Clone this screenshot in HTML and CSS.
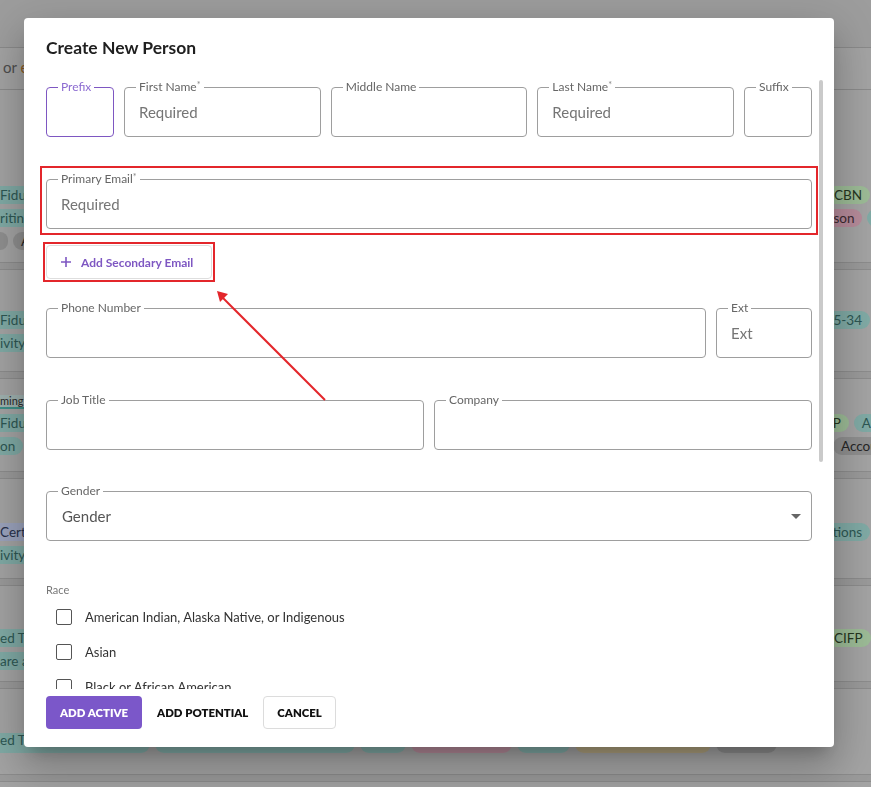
FILE: index.html
```html
<!DOCTYPE html>
<html lang="en">
	<head>
		<meta charset="UTF-8" />
		<meta name="viewport" content="width=device-width, initial-scale=1.0" />
		<title>Create New Person</title>
		<link rel="stylesheet" href="styles.css">
	</head>
	<body>
		<div class="page">
			<div class="topbar"></div>
			<div class="filterbar"><span class="dim">or</span> <span class="accent">e</span></div>

			<div class="row row-c">
				<div class="tagline">
					<div class="left"><span class="pill teal">Fiduciary Services</span></div>
					<div class="right"><span class="pill green">CBN</span></div>
				</div>
				<div class="tagline">
					<div class="left"><span class="pill teal">ritings and Reviews</span></div>
					<div class="right"><span class="pill pink shift-p">Jackson</span><span class="pill teal">A</span></div>
				</div>
				<div class="tagline">
					<div class="left"><span class="pill gray short"></span><span class="pill gray">Admin</span></div>
					<div class="right"></div>
				</div>
			</div>
			<div class="sep"></div>

			<div class="row row-d">
				<div class="tagline">
					<div class="left"><span class="pill teal">Fiduciary Services</span></div>
					<div class="right"><span class="pill teal shift-m">2025-34</span></div>
				</div>
				<div class="tagline">
					<div class="left"><span class="pill teal">ivity Reports</span></div>
					<div class="right"></div>
				</div>
			</div>
			<div class="sep"></div>

			<div class="row row-e">
				<div class="tab">ming</div>
				<div class="tagline">
					<div class="left"><span class="pill teal">Fiduciary Services</span></div>
					<div class="right"><span class="pill green shift-s">CFP</span><span class="pill teal">AIF</span></div>
				</div>
				<div class="tagline">
					<div class="left"><span class="pill teal">on</span></div>
					<div class="right"><span class="pill gray push">Accounting</span></div>
				</div>
			</div>
			<div class="sep"></div>

			<div class="row row-f">
				<div class="tagline">
					<div class="left"><span class="pill lav">Certified Planner</span></div>
					<div class="right"><span class="pill teal shift-l">Associations</span></div>
				</div>
				<div class="tagline">
					<div class="left"><span class="pill teal">ivity Reports</span></div>
					<div class="right"></div>
				</div>
			</div>
			<div class="sep"></div>

			<div class="row row-g">
				<div class="tagline">
					<div class="left"><span class="pill teal">ed Trust Company</span></div>
					<div class="right"><span class="pill green">CIFP</span></div>
				</div>
				<div class="tagline">
					<div class="left"><span class="pill teal">are and Tools</span></div>
					<div class="right"></div>
				</div>
			</div>
			<div class="sep"></div>

			<div class="row row-h">
				<div class="tagline tall">
					<div class="left">
						<span class="pill teal w150">ed Trust Company</span>
						<span class="pill teal w200">Fiduciary Services</span>
						<span class="pill teal w45">RIA</span>
						<span class="pill pink w100">Person</span>
						<span class="pill teal w52">AIF</span>
						<span class="pill tan w135">Estate Planning</span>
						<span class="pill gray w60">Admin</span>
					</div>
					<div class="right"></div>
				</div>
			</div>
			<div class="sep"></div>
		</div>

		<div class="modal">
			<h2 class="title">Create New Person</h2>

			<div class="body-wrap">
				<div class="body">
					<div class="name-row">
						<fieldset class="field focused narrow">
							<legend>Prefix</legend>
							<input type="text" />
						</fieldset>
						<fieldset class="field">
							<legend>First Name<span class="req">*</span></legend>
							<input type="text" placeholder="Required" />
						</fieldset>
						<fieldset class="field">
							<legend>Middle Name</legend>
							<input type="text" />
						</fieldset>
						<fieldset class="field">
							<legend>Last Name<span class="req">*</span></legend>
							<input type="text" placeholder="Required" />
						</fieldset>
						<fieldset class="field narrow">
							<legend>Suffix</legend>
							<input type="text" />
						</fieldset>
					</div>

					<div class="highlight email-box">
						<fieldset class="field">
							<legend>Primary Email<span class="req">*</span></legend>
							<input type="text" placeholder="Required" />
						</fieldset>
					</div>

					<div class="highlight add-box">
						<button class="add-email">
							<svg width="10" height="10" viewBox="0 0 10 10"><path d="M5 0v10M0 5h10" stroke="#7e57c2" stroke-width="1.6" /></svg>
							Add Secondary Email
						</button>
					</div>

					<div class="phone-row">
						<fieldset class="field">
							<legend>Phone Number</legend>
							<input type="text" />
						</fieldset>
						<fieldset class="field ext">
							<legend>Ext</legend>
							<input type="text" placeholder="Ext" />
						</fieldset>
					</div>

					<div class="job-row">
						<fieldset class="field">
							<legend>Job Title</legend>
							<input type="text" />
						</fieldset>
						<fieldset class="field">
							<legend>Company</legend>
							<input type="text" />
						</fieldset>
					</div>

					<fieldset class="field gender">
						<legend>Gender</legend>
						<div class="select">
							<span>Gender</span>
							<svg width="10" height="5" viewBox="0 0 10 5"><path d="M0 0h10L5 5z" fill="#666" /></svg>
						</div>
					</fieldset>

					<div class="race">
						<p class="race-label">Race</p>
						<label class="check"><input type="checkbox" />American Indian, Alaska Native, or Indigenous</label>
						<label class="check"><input type="checkbox" />Asian</label>
						<label class="check"><input type="checkbox" />Black or African American</label>
						<label class="check"><input type="checkbox" />Hispanic or Latino</label>
						<label class="check"><input type="checkbox" />Middle Eastern or North African</label>
						<label class="check"><input type="checkbox" />Native Hawaiian or Other Pacific Islander</label>
						<label class="check"><input type="checkbox" />White</label>
					</div>
				</div>
				<div class="scrollbar"><div class="thumb"></div></div>
			</div>

			<div class="footer">
				<button class="btn primary">ADD ACTIVE</button>
				<button class="btn">ADD POTENTIAL</button>
				<button class="btn outlined">CANCEL</button>
			</div>
		</div>

		<svg class="annotation" width="871" height="787" viewBox="0 0 871 787">
			<line x1="325" y1="400" x2="222" y2="297" stroke="#e3262b" stroke-width="2" />
			<polygon points="217,291 220,302 228,294" fill="#e3262b" />
		</svg>
	</body>
</html>
```

FILE: styles.css
```css
* {
	box-sizing: border-box;
}
body {
	margin: 0;
	height: 787px;
	overflow: hidden;
	font-family: Lato, "Liberation Sans", sans-serif;
	background-color: #a3a3a3;
}

/* dimmed page behind the dialog */
.page {
	width: 871px;
	overflow: hidden;
	background-color: #a3a3a3;
	color: #2a2a2a;
	font-size: 13.5px;
}
.topbar {
	height: 48px;
	background-color: #9d9d9d;
	border-bottom: 1px solid #8a8a8a;
}
.filterbar {
	height: 42px;
	padding: 10px 0 0 3px;
	font-size: 15px;
	border-bottom: 1px solid #8a8a8a;
	.dim {
		color: #4d4d4d;
	}
	.accent {
		color: #8a5a1e;
	}
}
.row {
	display: flex;
	flex-direction: column;
	gap: 5px;
}
.row-c {
	height: 172px;
	padding-top: 96px;
}
.row-d {
	height: 101px;
	padding-top: 41px;
}
.row-e {
	height: 92px;
	padding-top: 16px;
}
.row-f {
	height: 99px;
	padding-top: 44px;
}
.row-g {
	height: 95px;
	padding-top: 43px;
}
.row-h {
	height: 85px;
	padding-top: 44px;
}
.sep {
	height: 8px;
	background-color: #9a9a9a;
	border-top: 1px solid #8c8c8c;
	border-bottom: 1px solid #8c8c8c;
}
.tab {
	width: 40px;
	margin-left: -16px;
	font-size: 11px;
	line-height: 12px;
	padding-left: 16px;
	color: #2a2a2a;
	border-bottom: 2px solid #3d8f88;
	background-color: #9fb1af;
}
.tagline {
	display: grid;
	grid-template-columns: 834px 1fr;
	height: 18px;
	margin-left: -8px;
	.left,
	.right {
		display: flex;
		gap: 5px;
		overflow: hidden;
	}
}
.tagline.tall {
	height: 20px;
	.pill {
		height: 20px;
		line-height: 15px;
	}
}
.pill {
	flex: none;
	height: 18px;
	line-height: 18px;
	padding: 0 8px;
	border-radius: 9px;
	white-space: nowrap;
	overflow: hidden;
}
.shift-s {
	margin-left: -18px;
}
.shift-p {
	margin-left: -26px;
}
.shift-m {
	margin-left: -24px;
}
.shift-l {
	margin-left: -46px;
}
.push {
	margin-left: 7px;
}
.teal {
	background-color: #80aaa5;
	color: #2d5753;
}
.green {
	background-color: #9cbb96;
	color: #26361f;
}
.pink {
	background-color: #b68b9a;
	color: #3a2a30;
}
.gray {
	background-color: #8f8f8f;
	color: #262626;
}
.lav {
	background-color: #9ba3bd;
	color: #27304a;
}
.tan {
	background-color: #b0a27e;
	color: #3a3220;
}
.short {
	width: 13px;
}
.w150 { width: 158px; }
.w200 { width: 200px; }
.w45 { width: 46px; }
.w100 { width: 101px; }
.w52 { width: 53px; }
.w135 { width: 136px; }
.w60 { width: 61px; }

/* dialog */
.modal {
	position: fixed;
	top: 18px;
	left: 24px;
	width: 810px;
	height: 729px;
	display: flex;
	flex-direction: column;
	padding: 18px 11px 18px 16px;
	background-color: #fff;
	border-radius: 4px;
	box-shadow: 0 11px 15px -7px rgba(0, 0, 0, 0.2),
		0 24px 38px 3px rgba(0, 0, 0, 0.14), 0 9px 46px 8px rgba(0, 0, 0, 0.12);
}
.title {
	margin: 0 0 18px 6px;
	font-size: 17.5px;
	line-height: 24px;
	font-weight: 700;
	color: #1f1f1f;
}
.body-wrap {
	flex: 1;
	min-height: 0;
	display: flex;
	gap: 1px;
}
.body {
	flex: 1;
	min-width: 0;
	overflow: hidden;
	padding: 2px 6px 0;
}
.scrollbar {
	width: 4px;
	padding-top: 2px;
	.thumb {
		height: 382px;
		background-color: #cacaca;
		border-radius: 2px;
	}
}

.field {
	min-width: 0;
	margin: 0;
	padding: 0 14px 6px;
	border: 1px solid #9e9e9e;
	border-radius: 4px;
	legend {
		padding: 0 3px;
		margin-left: -3px;
		font-size: 12px;
		line-height: 14px;
		color: #666;
	}
	input {
		display: block;
		width: 100%;
		height: 36px;
		padding: 0;
		border: 0;
		outline: none;
		background: transparent;
		font-family: Lato, "Liberation Sans", sans-serif;
		font-size: 15px;
		color: #333;
	}
	input::placeholder {
		color: #757575;
	}
	.req {
		font-size: 9px;
		vertical-align: top;
		line-height: 10px;
		color: #888;
	}
}
.field.focused {
	border-color: #7e57c2;
	legend {
		color: #8c6bd1;
	}
}

.name-row {
	display: flex;
	gap: 10px;
	.field {
		flex: 1;
	}
	.narrow {
		flex: none;
		width: 68px;
	}
}

/* red annotation boxes */
.highlight {
	border: 2px solid #e3262b;
}
.email-box {
	margin: 29px -6px 0;
	padding: 4px;
}
.add-box {
	width: fit-content;
	margin: 7px 0 0 -3px;
	padding: 1px;
}
.add-email {
	display: flex;
	align-items: center;
	gap: 10px;
	width: 166px;
	height: 34px;
	padding: 0 14px;
	background: #fff;
	border: 1px solid #dedede;
	border-radius: 4px;
	font-family: Lato, "Liberation Sans", sans-serif;
	font-size: 12px;
	font-weight: 700;
	color: #7e57c2;
}
.phone-row {
	display: flex;
	gap: 10px;
	margin-top: 19px;
	.field {
		flex: 1;
	}
	.ext {
		flex: none;
		width: 96px;
	}
}
.job-row {
	display: flex;
	gap: 10px;
	margin-top: 35px;
	.field {
		flex: 1;
	}
}
.gender {
	margin-top: 34px;
	.select {
		display: flex;
		justify-content: space-between;
		align-items: center;
		height: 36px;
		margin-right: -4px;
		padding-left: 1px;
		font-size: 15px;
		color: #555;
	}
}
.race {
	margin-top: 42px;
	.race-label {
		margin: 0 0 2px;
		font-size: 11px;
		line-height: 14px;
		color: #777;
	}
	.check {
		display: flex;
		align-items: center;
		gap: 13px;
		height: 35px;
		padding-left: 10px;
		font-size: 13px;
		color: #333;
	}
	input {
		appearance: none;
		flex: none;
		width: 16px;
		height: 16px;
		margin: 0;
		border: 1.5px solid #555;
		border-radius: 2px;
	}
}

.footer {
	display: flex;
	gap: 1px;
	padding: 7px 0 0 6px;
}
.btn {
	height: 33px;
	padding: 0 13px;
	background: none;
	border: 1px solid transparent;
	border-radius: 4px;
	font-family: Lato, "Liberation Sans", sans-serif;
	font-size: 11.4px;
	font-weight: 800;
	color: #111;
}
.btn.primary {
	background-color: #7b57c9;
	color: #fff;
}
.btn.outlined {
	border-color: #dcdcdc;
}

.annotation {
	position: fixed;
	top: 0;
	left: 0;
	pointer-events: none;
}
```
